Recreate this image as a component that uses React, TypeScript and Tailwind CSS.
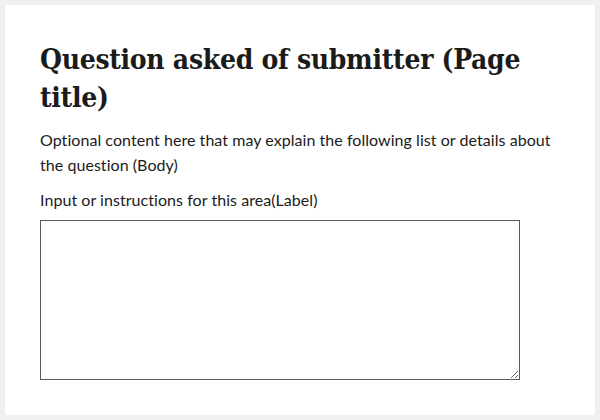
export default function App() {
  return (
    <div className="w-[600px] h-[420px] bg-[#f0f0f0] p-[5px]">
      <div className="h-full bg-white px-[35px] pt-[36px] text-[#1b1b1b] font-['Lato',sans-serif]">
        <h1 className="font-['DejaVu_Serif_Condensed','DejaVu_Serif',serif] font-bold text-[28px] leading-[38px] tracking-[-0.3px]">
          Question asked of submitter (Page title)
        </h1>
        <p className="mt-[10px] text-[16px] leading-[25px] tracking-[0.05px]">
          Optional content here that may explain the following list or details about the question (Body)
        </p>
        <label htmlFor="answer" className="block mt-[10px] text-[16px] leading-[25px] tracking-[0.05px]">
          Input or instructions for this area(Label)
        </label>
        <textarea
          id="answer"
          className="block mt-[8px] w-[480px] h-[160px] border border-[#565c65] bg-white"
        />
      </div>
    </div>
  );
}
